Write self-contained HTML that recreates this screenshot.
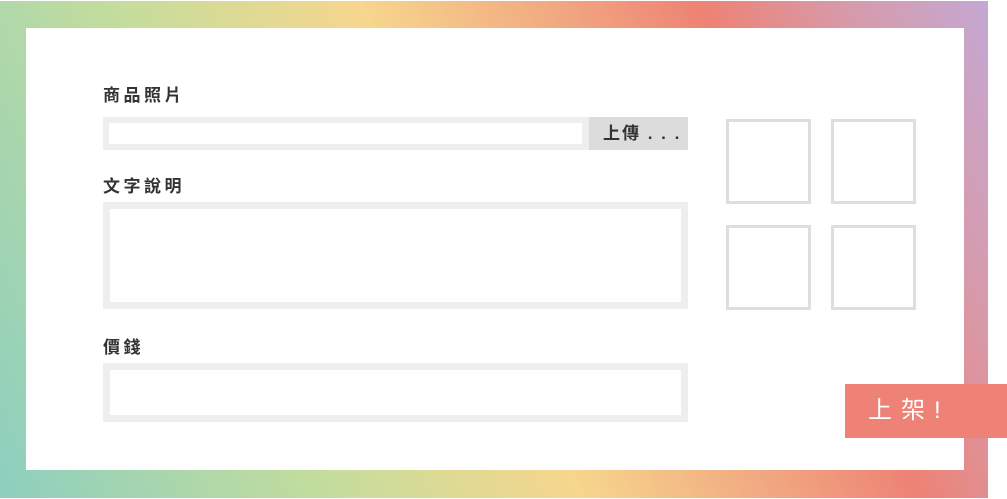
<!DOCTYPE html>
<html><head><meta charset="utf-8"><style>
body{margin:0;width:1007px;height:499px;position:relative;background:#fff;font-family:"Liberation Sans","Noto Sans CJK TC",sans-serif;overflow:hidden}
.g{position:absolute;left:0;top:1px;width:988px;height:497px;background:linear-gradient(66deg,#8ccfbf 0%,#c5dd9c 28%,#f7d68d 48%,#f0a27f 66%,#ee8275 76%,#d79aaa 88%,#c4a8d4 100%)}
.w{position:absolute;left:26px;top:28px;width:938px;height:442px;background:#fff}
.lbl{position:absolute;left:103px;font-size:17px;color:#333;letter-spacing:3.5px;font-weight:bold}
.box{position:absolute;box-sizing:border-box;border:7px solid #eeeeee;background:#fff}
.sq{position:absolute;width:85px;height:85px;box-sizing:border-box;border:3px solid #dedede}
.btn{position:absolute;left:589px;top:117px;width:99px;height:33px;background:#dcdcdc;color:#333;font-size:17px;line-height:33px;padding-left:14px;box-sizing:border-box;letter-spacing:2px;font-weight:bold}
.up{position:absolute;left:845px;top:384px;width:162px;height:54px;background:#ee8277;color:#fff;font-size:24px;line-height:54px;padding-left:23px;box-sizing:border-box;letter-spacing:9px}
</style></head><body>
<div class="g"></div><div class="w"></div>
<div class="lbl" style="top:81px">商品照片</div>
<div class="box" style="left:103px;top:117px;width:486px;height:33px;border-width:6px;border-right-width:7px"></div>
<div class="btn">上傳 . . .</div>
<div class="lbl" style="top:172px">文字說明</div>
<div class="box" style="left:103px;top:202px;width:585px;height:107px"></div>
<div class="lbl" style="top:333px">價錢</div>
<div class="box" style="left:103px;top:363px;width:585px;height:59px"></div>
<div class="sq" style="left:726px;top:119px"></div>
<div class="sq" style="left:831px;top:119px"></div>
<div class="sq" style="left:726px;top:225px"></div>
<div class="sq" style="left:831px;top:225px"></div>
<div class="up">上架!</div>
</body></html>
